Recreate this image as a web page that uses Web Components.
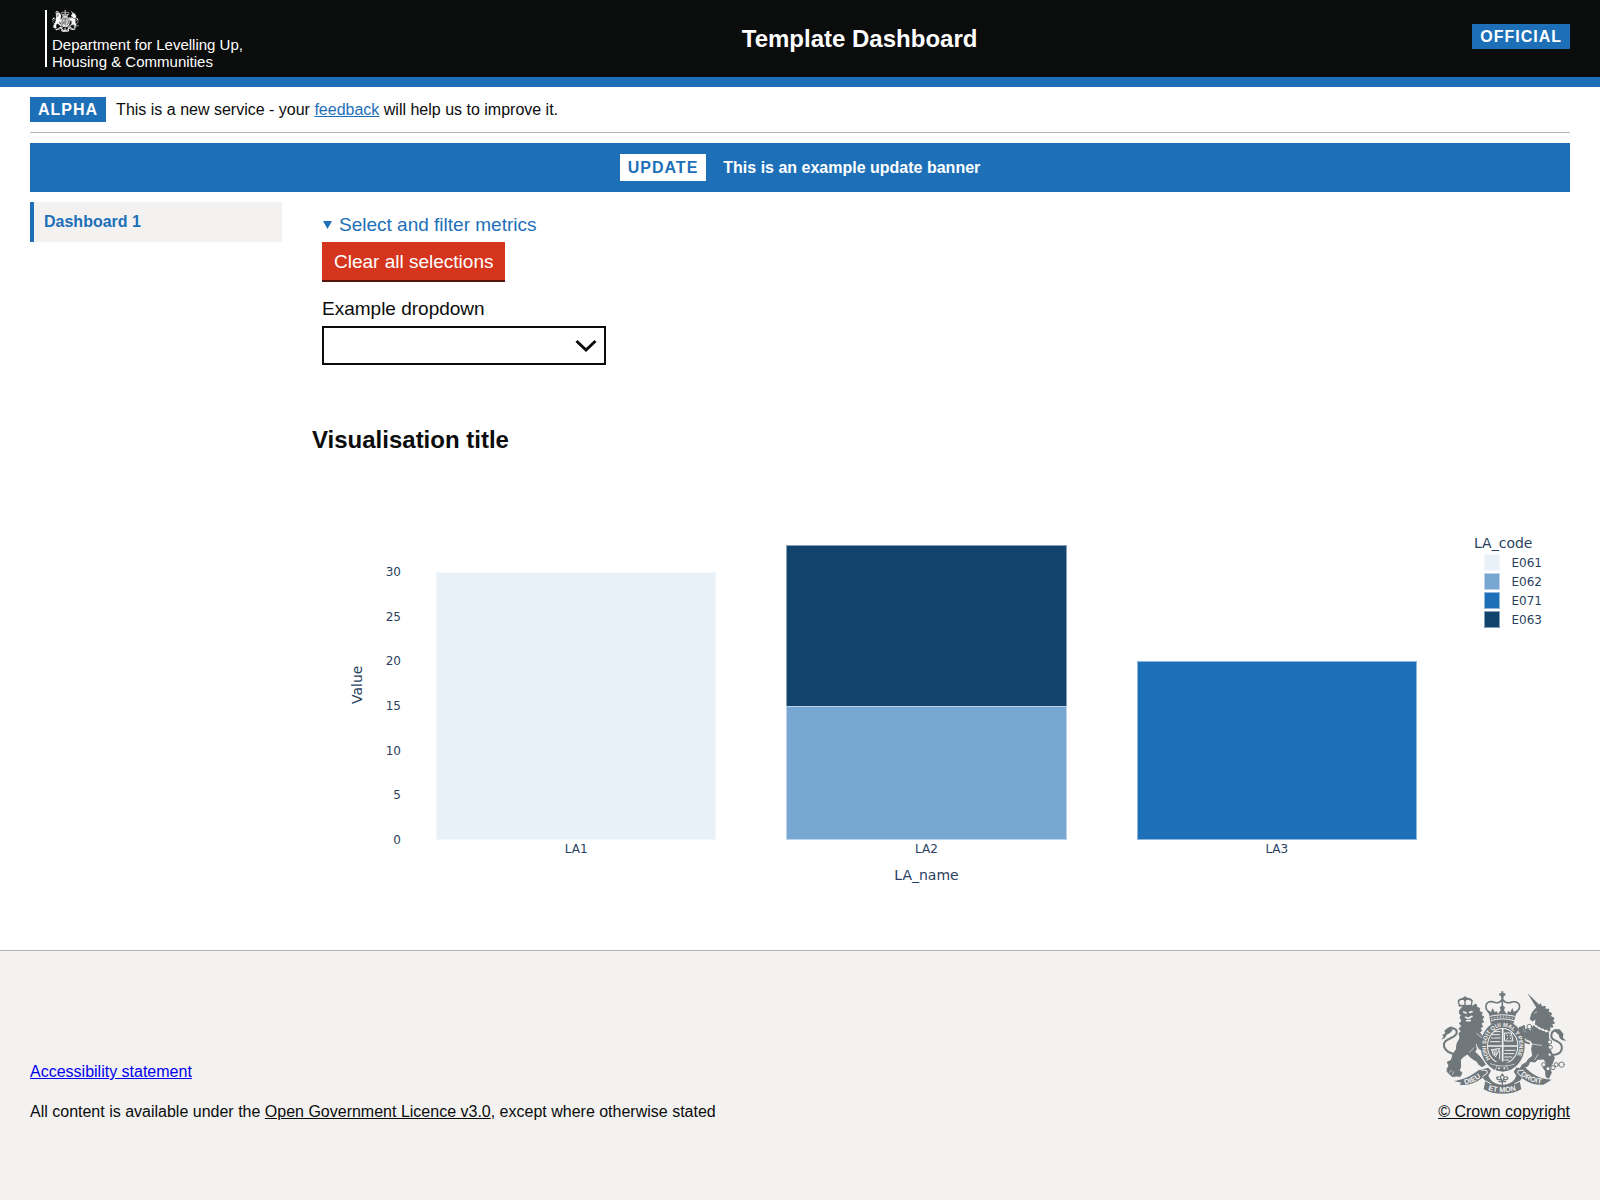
<!DOCTYPE html>
<html lang="en">
<head>
<meta charset="utf-8">
<title>Template Dashboard</title>
<style>
  html, body { margin: 0; }
  body {
    font: 16px/20px "Liberation Sans", Arial, sans-serif;
    color: #0b0c0c;
    --brand: #1d70b8;
    --ink: #0b0c0c;
    --panel: #f3f2f1;
    --rule: #b1b4b6;
    --gutter: 30px;
    background: #fff;
  }
</style>
</head>
<body>
<dashboard-page></dashboard-page>

<template id="crest">
  <style>
    :host { display: block; }
    svg { display: block; width: 100%; height: auto; }
    .f { fill: currentColor; }
    .g { fill: var(--gap); }
    .l { fill: none; stroke: currentColor; stroke-linecap: round; stroke-linejoin: round; }
    .k { fill: none; stroke: var(--gap); stroke-linecap: round; stroke-linejoin: round; }
    .body { stroke: currentColor; stroke-width: 3; stroke-linejoin: round; }
    text { font: bold 22px "Liberation Sans", Arial, sans-serif; fill: var(--gap); }
    text.garter { font-size: 17px; }
  </style>
  <svg viewBox="65 61 378 310" role="img" aria-label="Royal coat of arms">
    <!-- lion -->
    <g>
      <path class="l" stroke-width="6" d="M103 250C78 244 66 224 79 211C91 200 111 201 112 186C113 172 92 167 80 181"/>
      <path class="f" d="M66 207L73 197L68 193L78 188L75 180L86 171L99 166L94 175L101 177L92 187L82 192L77 202Z"/>
      <path class="f body" d="M121 119L130 108L145 105L158 107L170 100L173 110L181 113L179 122L189 126L185 134L194 139L188 145L193 154L185 158L190 168L182 171L187 180L181 186L187 194L195 203L200 216L190 222L193 231L201 237L197 246L188 240L178 233L174 222L168 216L171 236L166 244L176 252L190 269L198 282L188 288L178 281L174 273L156 262L144 250L131 259L123 268L124 287L120 300L128 306L123 317L110 316L100 318L91 311L83 302L84 293L89 286L84 274L96 269L101 251L111 236L113 219L122 202L119 188L126 182L119 174L127 166L120 158L128 151L122 141L126 133L120 128Z"/>
      <path class="k" stroke-width="5" d="M133 124L140 127M151 125L158 123M139 140L148 143L158 137M142 150L153 150"/>
      <path class="k" stroke-width="2" d="M172 188C184 200 192 205 202 211M150 245L164 231M91 305L96 299M100 311L103 303"/>
      <path class="l" stroke-width="4" d="M121 105L117 93C118 83 134 83 137 91C139 83 156 82 158 91L156 105ZM137 91V102M137 78V88M132 82H143"/>
      <path class="l" stroke-width="5" stroke-dasharray="4 4" d="M120 105H156M119 90C124 82 149 81 157 90"/>
    </g>
    <!-- unicorn -->
    <g>
      <path class="f" d="M324 67L366 108L353 114Z"/>
      <path class="f body" d="M333 146L337 129L344 119L353 110L361 107L363 99L368 109L378 107L376 115L389 116L386 124L397 128L393 137L404 142L400 151L406 157L397 161L401 169L391 169L392 180L386 180L388 198L389 215L391 234L397 246L405 261L399 279L391 291L396 306L388 323L380 318L379 301L371 291L382 280L374 265L355 266L347 274L332 272L326 285L312 293L303 293L309 282L321 276L326 267L340 256L337 235L340 219L333 209L324 207L310 196L301 184L300 170L309 169L312 183L326 190L318 180L324 174L333 182L340 169L349 157L350 144L340 151Z"/>
      <path class="l" stroke-width="6" d="M311 199L317 214L329 218M302 174L314 166L315 177"/>
      <path class="l" stroke-width="6" d="M393 252C420 256 432 240 426 223C418 206 396 213 396 196C396 177 417 173 424 190"/>
      <path class="f" d="M401 177L421 176L432 189L431 202L441 210L429 209L421 203L418 192Z"/>
      <path class="k" stroke-width="6" stroke-dasharray="5 6" d="M341 158C351 169 367 177 384 182"/>
      <path class="k" stroke-width="2" d="M346 127L352 124M336 220L367 224M346 267L356 252"/>
      <g class="l" stroke-width="3"><circle cx="330" cy="168" r="7"/><circle cx="322" cy="181" r="6"/><circle cx="427" cy="282" r="8"/><circle cx="411" cy="282" r="6"/></g>
      <g class="g" stroke="currentColor" stroke-width="3"><circle cx="391" cy="214" r="6"/><circle cx="393" cy="230" r="6"/><circle cx="391" cy="252" r="5"/><circle cx="373" cy="282" r="6"/><circle cx="386" cy="294" r="6"/><circle cx="401" cy="291" r="6"/></g>
    </g>
    <!-- crown -->
    <g>
      <path class="f" d="M246 62H252V68H258V75H253V82H245V75H240V68H246Z"/>
      <path class="l" stroke-width="5" stroke-dasharray="5 2" d="M214 133L201 115C196 96 210 89 225 95C237 99 245 93 249 84C253 93 262 99 275 95C291 89 305 99 299 115L285 133M249 91V111"/>
      <path class="f" d="M209 130L207 119L215 124L220 112L226 124L233 122L236 130L244 118L241 110L249 104L257 110L254 119L263 130L266 121L273 125L279 112L284 124L293 118L290 130L286 145L282 160L259 154L238 154L214 160Z"/>
      <path class="k" stroke-width="3" d="M213 137C235 131 263 131 286 137M216 150C237 143 262 143 283 150"/>
      <path class="k" stroke-width="3" stroke-dasharray="2 7" d="M216 144C237 137 262 137 284 144"/>
    </g>
    <!-- garter and shield -->
    <g>
      <ellipse class="f" cx="250" cy="226" rx="66" ry="76"/>
      <ellipse class="g" cx="250" cy="226" rx="47" ry="54"/>
      <ellipse class="f" cx="250" cy="226" rx="44" ry="51"/>
      <path class="k" stroke-width="5" d="M250 176V276M207 226H293"/>
      <g class="k" stroke-width="3"><path d="M216 202H242M218 192L241 192M224 183L242 183M213 213L242 213M256 187L276 187L281 211L257 211ZM262 193L275 204M274 193L262 206M257 239H287M256 249H284M256 259H278M256 268H268M217 236L221 251L229 258L241 233L217 238M223 237L226 252M230 236L230 252M241 240V265"/></g>
      <g class="f"><circle cx="224" cy="198" r="3"/><circle cx="236" cy="188" r="3"/><circle cx="268" cy="199" r="4"/><circle cx="266" cy="254" r="3"/></g>
      <path id="garter-line" fill="none" d="M213 265A50 58 0 1 1 287 265"/>
      <text class="garter"><textPath href="#garter-line">HONI SOIT QUI MAL Y PENSE</textPath></text>
      <path class="f" d="M207 277L248 272L286 280L277 296L251 303L222 296Z"/>
      <path class="k" stroke-width="2" d="M213 279C234 288 263 288 284 281M228 297L234 284M266 297L261 284"/>
      <circle class="g" cx="239" cy="293" r="3"/><circle class="g" cx="255" cy="293" r="3"/>
    </g>
    <!-- fleur -->
    <path class="g" d="M218 304H280V340H218Z"/>
    <path class="l" stroke-width="4" d="M249 310L243 319L249 335L255 319ZM244 327C230 329 229 318 238 319M254 327C268 329 268 318 260 319M239 333H259M249 334V341"/>
    <!-- motto ribbon -->
    <g>
      <path class="f" d="M103 331C133 328 157 315 177 299L207 291L215 301L207 315L213 326L220 333C239 345 260 345 279 333L286 325L291 315L283 303L291 291L319 292C342 313 361 325 397 327L372 342C350 345 326 336 308 322L301 332L306 356C275 374 224 374 193 356L198 331L190 321C172 336 145 345 121 343L126 336Z"/>
      <path class="k" stroke-width="3" d="M186 298L202 299L204 307L190 318M312 299L297 299L295 307L308 320M199 331L214 339M301 332L286 339"/>
      <path id="motto-left" fill="none" d="M137 342C159 337 178 326 194 313"/>
      <path id="motto-mid" fill="none" d="M206 358C233 367 267 367 298 357"/>
      <path id="motto-right" fill="none" d="M304 313C322 328 344 338 376 340"/>
      <text><textPath href="#motto-left">DIEU</textPath></text>
      <text><textPath href="#motto-mid">ET MON</textPath></text>
      <text><textPath href="#motto-right">DROIT</textPath></text>
    </g>
  </svg>
</template>

<template id="tag">
  <style>
    :host { display: block; flex: none; box-sizing: border-box; height: 25px; padding: 0 8px; background: var(--brand); color: #fff;
      font-weight: bold; line-height: 26px; letter-spacing: 1px; text-transform: uppercase; }
    :host([inverse]) { height: 27px; background: #fff; color: var(--brand); line-height: 27px; }
  </style><slot></slot>
</template>

<template id="header">
  <style>
    header { display: flex; justify-content: space-between; align-items: flex-start; box-sizing: border-box; height: 87px;
      padding: 10px var(--gutter) 0 45px; background: var(--ink); border-bottom: 10px solid var(--brand); color: #fff; }
    .org { border-left: 2px solid #fff; padding: 0 4px 0 5px; height: 57px; color: #fff; text-decoration: none; font-size: 15px; line-height: 17px; }
    royal-crest { width: 27px; height: 26px; color: #fff; --gap: #0b0c0c; }
    .org span { display: block; white-space: nowrap; }
    h1 { margin: 14px 0 0; font-size: 24px; line-height: 30px; }
    page-tag { margin-top: 14px; }
  </style>
  <header>
    <a class="org" href="#"><royal-crest></royal-crest><span>Department for Levelling Up,</span><span>Housing &amp; Communities</span></a>
    <h1><slot></slot></h1>
    <page-tag>Official</page-tag>
  </header>
</template>

<template id="phase">
  <style>
    :host { display: flex; align-items: center; gap: 10px; margin: 0 var(--gutter); padding: 10px 0; border-bottom: 1px solid var(--rule); }
    p { margin: 0; } a { color: var(--brand); }
  </style>
  <page-tag>Alpha</page-tag>
  <p>This is a new service - your <a href="#">feedback</a> will help us to improve it.</p>
</template>

<template id="update">
  <style>
    :host { display: flex; justify-content: center; align-items: center; gap: 17px; margin: 10px var(--gutter); padding: 11px 0;
      background: var(--brand); color: #fff; font-weight: bold; }
  </style>
  <page-tag inverse>Update</page-tag><slot></slot>
</template>

<template id="nav">
  <style>
    :host { display: block; }
    a { display: block; box-sizing: border-box; height: 40px; padding: 0 10px; border-left: 4px solid var(--brand); background: var(--panel);
      color: var(--brand); font-weight: bold; line-height: 39px; text-decoration: none; }
  </style>
  <nav><a href="#"><slot></slot></a></nav>
</template>

<template id="filters">
  <style>
    :host { display: block; padding: 10px; font-size: 19px; line-height: 25px; }
    summary { display: flex; align-items: center; gap: 7px; color: var(--brand); cursor: pointer; list-style: none; }
    button { display: block; box-sizing: border-box; height: 40px; margin: 5px 0 14px; padding: 1px 12px 0; border: 0; border-bottom: 2px solid #55150b;
      background: #d4351c; color: #fff; font: inherit; }
    label { display: block; margin-bottom: 5px; }
    .box { display: grid; width: 284px; max-width: 100%; }
    select, .box svg { grid-area: 1 / 1; }
    select { appearance: none; height: 39px; margin: 0; padding: 0 40px 0 8px; border: 2px solid var(--ink); border-radius: 0; background: #fff; font: inherit; }
    .box svg { place-self: center end; margin-right: 9px; pointer-events: none; }
  </style>
  <details open>
    <summary><svg width="10" height="8" aria-hidden="true"><path d="M1 0H10L5.500 8Z" fill="#1d70b8"/></svg>Select and filter metrics</summary>
    <button type="button">Clear all selections</button>
    <label for="metric">Example dropdown</label>
    <div class="box">
      <select id="metric"><option></option></select>
      <svg width="22" height="14" viewBox="0 0 22 14" aria-hidden="true"><path d="M1.500 2L11 11L20.500 2" fill="none" stroke="#0b0c0c" stroke-width="3"/></svg>
    </div>
  </details>
</template>

<template id="chart">
  <style>
    :host { display: flex; padding: 75px 28px 65px 35px; font: 12px/16px "DejaVu Sans", Verdana, sans-serif; color: #2a3f5f; --plot: 310px; --h: 268px; }
    .title { font-size: 14px; }
    .y { width: 20px; height: var(--plot); writing-mode: vertical-rl; transform: rotate(180deg); text-align: center; line-height: 20px; }
    .ticks { display: flex; flex-direction: column; justify-content: space-between; width: 34px; height: calc(var(--h) + 16px); margin-top: 34px; text-align: right; }
    .plot { flex: 1; }
    .bars { display: flex; height: var(--plot); }
    .col { flex: 1; display: flex; flex-direction: column; justify-content: flex-end; padding-inline: calc(100% / 30); }
    .bar { box-sizing: border-box; height: calc(var(--h) * var(--v) / 30); border: 1px solid #ffffff80; }
    .bar.stacked { border-bottom: 0; }
    .names { display: flex; text-align: center; margin: 1px 0 8px; }
    .names span { flex: 1; }
    .plot .title { text-align: center; line-height: 20px; }
    .legend { margin: 4px 0 0 22px; width: 68px; }
    .legend ul { margin: 0; padding: 0 0 0 10px; list-style: none; }
    .legend li { display: flex; align-items: center; gap: 12px; height: 19px; }
    .legend i { box-sizing: border-box; width: 16px; height: 17px; border: 1px solid #ffffff80; }
    .legend .title { line-height: 18px; padding-bottom: 1px; }
  </style>
  <div class="title y">Value</div>
  <div class="ticks"></div>
  <div class="plot">
    <div class="bars"></div>
    <div class="names"></div>
    <div class="title">LA_name</div>
  </div>
  <div class="legend"><div class="title">LA_code</div><ul></ul></div>
</template>

<template id="footer">
  <style>
    footer { flex: 1; display: flex; justify-content: space-between; align-items: flex-start; padding: 40px var(--gutter); background: var(--panel); border-top: 1px solid var(--rule); }
    p { margin: 0 0 20px; }
    .text { padding-top: 71px; }
    .dark { color: var(--ink); }
    .plain { color: #0000ee; }
    .crown { display: flex; flex-direction: column; align-items: center; gap: 8px; color: var(--ink); }
    royal-crest { width: 126px; height: 103px; color: #6f777b; --gap: #f3f2f1; }
  </style>
  <footer>
    <div class="text">
      <p><a class="plain" href="#">Accessibility statement</a></p>
      <p>All content is available under the <a class="dark" href="#">Open Government Licence v3.0</a>, except where otherwise stated</p>
    </div>
    <a class="crown" href="#"><royal-crest></royal-crest><span>© Crown copyright</span></a>
  </footer>
</template>

<template id="page">
  <style>
    :host { display: flex; flex-direction: column; min-height: 100vh; }
    .body { display: flex; gap: 30px; margin: 0 var(--gutter); }
    side-nav { flex: none; width: 252px; }
    main { flex: 1; min-width: 0; }
    h2 { margin: 50px 0 0; font-size: 24px; line-height: 30px; }
    page-footer { flex: 1; display: flex; }
  </style>
  <app-header>Template Dashboard</app-header>
  <phase-banner></phase-banner>
  <update-banner>This is an example update banner</update-banner>
  <div class="body">
    <side-nav>Dashboard 1</side-nav>
    <main>
      <filter-panel></filter-panel>
      <h2>Visualisation title</h2>
      <stacked-chart></stacked-chart>
    </main>
  </div>
  <page-footer></page-footer>
</template>

<script>
  class TemplateElement extends HTMLElement {
    constructor() {
      super();
      const source = document.getElementById(this.constructor.template);
      this.attachShadow({ mode: "open" }).append(source.content.cloneNode(true));
    }
  }
  const define = (name, template) =>
    customElements.define(name, class extends TemplateElement { static template = template; });

  class StackedChart extends TemplateElement {
    static template = "chart";
    connectedCallback() {
      const colours = { E061: "#e8f0f8", E062: "#78a7d4", E071: "#1d70b8", E063: "#12436d" };
      const data = [
        ["LA1", [["E061", 30]]],
        ["LA2", [["E063", 18], ["E062", 15]]],
        ["LA3", [["E071", 20]]],
      ];
      const $ = (s) => this.shadowRoot.querySelector(s);
      $(".ticks").innerHTML = [30, 25, 20, 15, 10, 5, 0].map((n) => `<span>${n}</span>`).join("");
      $(".bars").innerHTML = data.map(([, parts]) => `<div class="col">${parts.map(([code, v], i) =>
        `<div class="bar${i < parts.length - 1 ? " stacked" : ""}" style="--v:${v};background-color:${colours[code]}"></div>`).join("")}</div>`).join("");
      $(".names").innerHTML = data.map(([name]) => `<span>${name}</span>`).join("");
      $("ul").innerHTML = Object.entries(colours).map(([code, c]) =>
        `<li><i style="background-color:${c}"></i>${code}</li>`).join("");
    }
  }

  define("royal-crest", "crest");
  define("page-tag", "tag");
  define("app-header", "header");
  define("phase-banner", "phase");
  define("update-banner", "update");
  define("side-nav", "nav");
  define("filter-panel", "filters");
  customElements.define("stacked-chart", StackedChart);
  define("page-footer", "footer");
  define("dashboard-page", "page");
</script>
</body>
</html>
